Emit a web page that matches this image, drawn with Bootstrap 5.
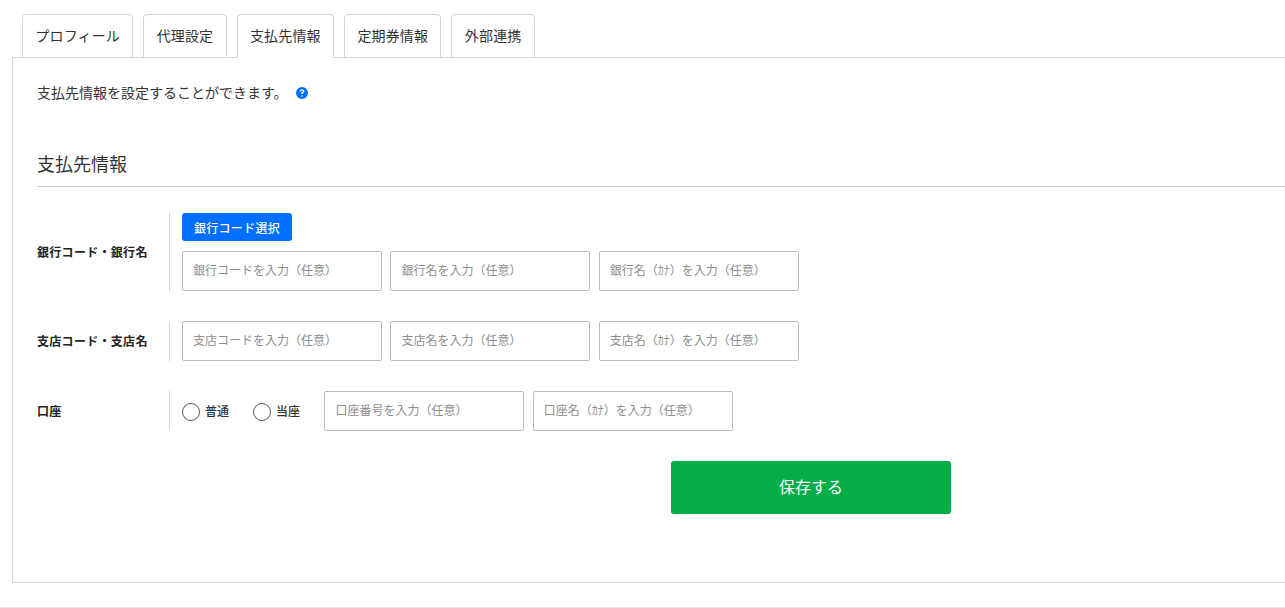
<!DOCTYPE html>
<html lang="ja">
<head>
<meta charset="utf-8">
<title>支払先情報</title>
<link href="https://cdn.jsdelivr.net/npm/bootstrap@5.3.0/dist/css/bootstrap.min.css" rel="stylesheet">
<style>
html,body{height:608px;overflow:hidden}
body{font-family:"Noto Sans CJK JP","Liberation Sans",sans-serif;color:#333;background:#fff;font-size:13px}
.page-wrap{padding-top:14px;height:608px;border-bottom:1px solid #e9e9e9}
.tab-row{gap:10px;padding-left:22px;border:0;position:relative;z-index:1;margin-bottom:-1px}
.tab-row .nav-link{height:44px;padding:0 12.35px;font-size:14px;letter-spacing:.15px;line-height:41px;color:#333;border:1px solid #d4d4d4;border-radius:4px 4px 0 0;background:#fff;margin:0}
.tab-row .nav-link.active{color:#333;background:#fff;border-color:#d4d4d4 #d4d4d4 #fff}
.panel-box{margin-left:12px;height:526px;border:1px solid #d4d4d4;border-right:0;padding:23px 0 0 24px}
.intro-line{font-size:14px;line-height:22px;gap:8.5px;height:22px}
.help-mark{margin-top:2px}
.sec-title{font-size:18px;font-weight:400;line-height:26px;margin:47px 0 0;padding-bottom:10px;border-bottom:1px solid #c8c8c8;color:#333}
.form-line{display:flex;align-items:center}
.line-label{width:132px;flex:none;font-size:12px;font-weight:700;color:#222;letter-spacing:.3px}
.line-body{border-left:1px solid #d4d4d4;padding-left:12px;display:flex;flex-direction:column;gap:10px}
.form-line.one{margin-top:26px}
.form-line.two{margin-top:30px}
.form-line.three{margin-top:30px}
.pick-btn{width:110px;height:28px;padding:0;font-size:12px;line-height:27px;border-radius:3px;background:#006eff;border:0;color:#fff;letter-spacing:.3px;font-weight:500}
.input-set{display:flex;gap:8.4px}
.entry{width:200px;height:40px;flex:none;border:1px solid #bdbdbd;border-radius:2px;font-size:12px;padding:0 10px 3px;color:#333}
.entry::placeholder{color:#8e8e8e;opacity:1}
.entry:focus{box-shadow:none;border-color:#bdbdbd}
.radio-pick{display:flex;align-items:center;gap:5px;font-size:12px;font-weight:500;color:#333;margin:0;padding:0;min-height:0}
.radio-pick .form-check-input{width:18px;height:18px;margin:2px 0 0;border:1px solid #555;float:none}
.radio-set{display:flex;align-items:center;height:40px;gap:24px;margin-right:16px}
.save-row{margin-top:30px;padding-right:334px;display:flex;justify-content:flex-end}
.save-btn{width:280px;height:53px;padding:0 0 3px;background:#03ad48;border:0;color:#fff;font-size:16px;border-radius:3px}
.save-btn:hover{background:#03ad48;color:#fff}
</style>
</head>
<body>
<div class="page-wrap">
  <ul class="nav nav-tabs tab-row">
    <li class="nav-item"><a class="nav-link" href="#">プロフィール</a></li>
    <li class="nav-item"><a class="nav-link" href="#">代理設定</a></li>
    <li class="nav-item"><a class="nav-link active" href="#">支払先情報</a></li>
    <li class="nav-item"><a class="nav-link" href="#">定期券情報</a></li>
    <li class="nav-item"><a class="nav-link" href="#">外部連携</a></li>
  </ul>
  <div class="panel-box">
    <div class="d-flex align-items-center intro-line">
      <span>支払先情報を設定することができます。</span>
      <svg class="help-mark" width="12" height="12" viewBox="0 0 16 16" aria-hidden="true"><path fill="#006eff" fill-rule="evenodd" d="M16 8A8 8 0 1 1 0 8a8 8 0 0 1 16 0zM4.9 6h2c.1-.9.5-1.4 1.1-1.4.6 0 1 .4 1 .9 0 .5-.2.7-.8 1.2-.8.6-1.2 1.1-1.1 2.1v.5h1.9v-.4c0-.6.2-.8.9-1.3.8-.6 1.3-1.2 1.3-2.2 0-1.5-1.3-2.5-3-2.5-1.8 0-3.2 1-3.3 3.1zM8 13.2c.7 0 1.2-.5 1.2-1.1 0-.7-.5-1.2-1.2-1.2s-1.2.5-1.2 1.2c0 .6.5 1.1 1.2 1.1z"/></svg>
    </div>
    <h2 class="sec-title">支払先情報</h2>

    <div class="form-line one">
      <div class="line-label">銀行コード・銀行名</div>
      <div class="line-body">
        <div><button type="button" class="btn btn-primary pick-btn">銀行コード選択</button></div>
        <div class="input-set">
          <input class="form-control entry" placeholder="銀行コードを入力（任意）">
          <input class="form-control entry" placeholder="銀行名を入力（任意）">
          <input class="form-control entry" placeholder="銀行名（ｶﾅ）を入力（任意）">
        </div>
      </div>
    </div>

    <div class="form-line two">
      <div class="line-label">支店コード・支店名</div>
      <div class="line-body">
        <div class="input-set">
          <input class="form-control entry" placeholder="支店コードを入力（任意）">
          <input class="form-control entry" placeholder="支店名を入力（任意）">
          <input class="form-control entry" placeholder="支店名（ｶﾅ）を入力（任意）">
        </div>
      </div>
    </div>

    <div class="form-line three">
      <div class="line-label">口座</div>
      <div class="line-body">
        <div class="input-set">
          <div class="radio-set">
            <label class="form-check radio-pick"><input class="form-check-input" type="radio" name="acct">普通</label>
            <label class="form-check radio-pick"><input class="form-check-input" type="radio" name="acct">当座</label>
          </div>
          <input class="form-control entry" placeholder="口座番号を入力（任意）">
          <input class="form-control entry" placeholder="口座名（ｶﾅ）を入力（任意）">
        </div>
      </div>
    </div>

    <div class="save-row"><button type="button" class="btn save-btn">保存する</button></div>
  </div>
</div>
<script src="https://cdn.jsdelivr.net/npm/bootstrap@5.3.0/dist/js/bootstrap.bundle.min.js"></script>
</body>
</html>
